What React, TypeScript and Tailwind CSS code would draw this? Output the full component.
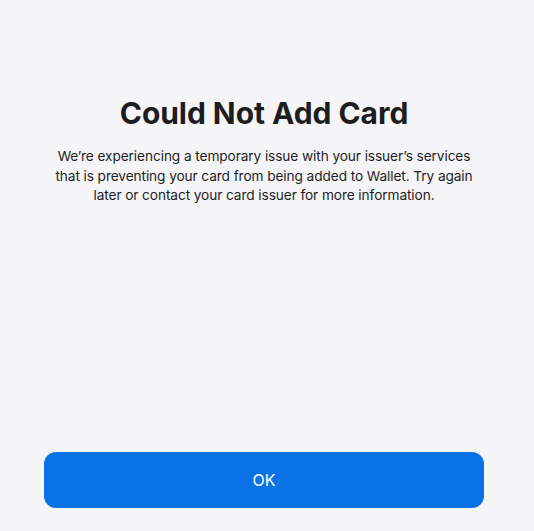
export default function App() {
  return (
    <div
      className="flex h-[531px] w-full flex-col items-center bg-[#f5f5f8] pr-[6px] text-[#1d1d1f]"
      style={{ fontFamily: 'Inter, "Noto Sans", sans-serif' }}
    >
      <h1 className="mt-[95px] text-[30px] font-bold leading-[36px] tracking-[-0.05px]">
        Could Not Add Card
      </h1>
      <p className="mt-[16px] w-[430px] text-center text-[13.7px] leading-[19.5px] tracking-[-0.1px]">
        We’re experiencing a temporary issue with your issuer’s services that is
        preventing your card from being added to Wallet. Try again later or
        contact your card issuer for more information.
      </p>
      <div className="flex-1" />
      <button className="mb-[23px] h-[56px] w-[440px] rounded-[12px] bg-[#0a72e4] text-[16px] text-white">
        OK
      </button>
    </div>
  );
}
